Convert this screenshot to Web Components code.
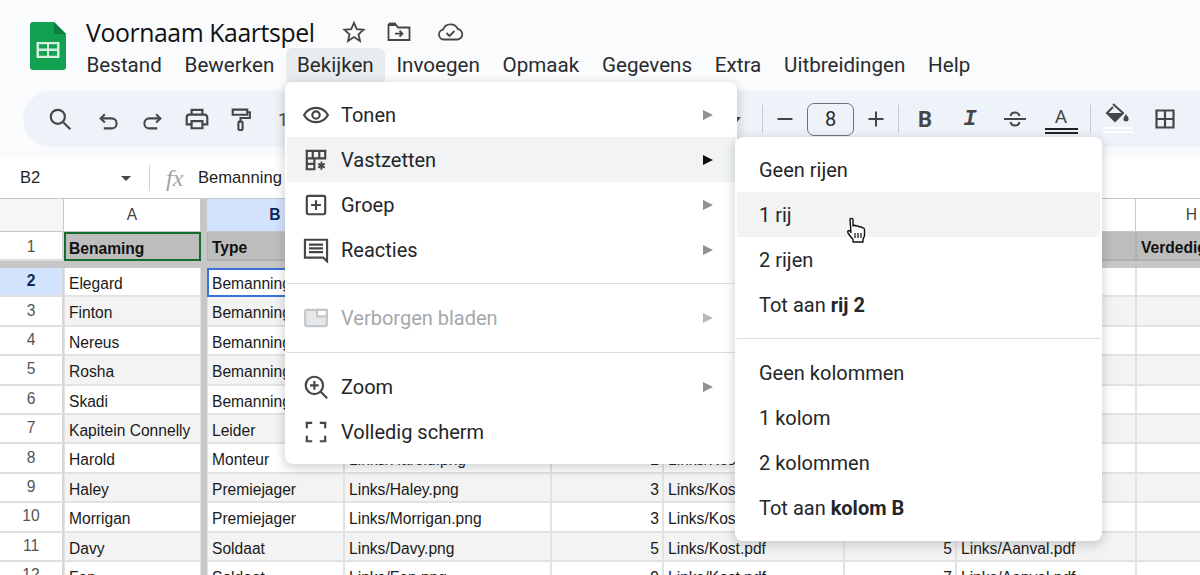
<!DOCTYPE html>
<html lang="nl">
<head>
<meta charset="UTF-8">
<title>Voornaam Kaartspel</title>
<style>
  html, body { margin: 0; height: 575px; overflow: hidden; background: #fff; }
  body { position: relative; font-family: Roboto, "Liberation Sans", sans-serif; color: #1f1f1f; }
  pop-menu.main { left: 285px; top: 82px; width: 452px; }
  pop-menu.sub { left: 735px; top: 137px; width: 367px; }
</style>
</head>
<body>
<doc-header></doc-header>
<tool-bar></tool-bar>
<formula-bar></formula-bar>
<sheet-grid></sheet-grid>

<pop-menu class="main">
  <menu-row icon="eye" arrow>Tonen</menu-row>
  <menu-row icon="freeze" arrow active>Vastzetten</menu-row>
  <menu-row icon="group" arrow>Groep</menu-row>
  <menu-row icon="comments" arrow>Reacties</menu-row>
  <menu-line></menu-line>
  <menu-row icon="hidden" arrow disabled>Verborgen bladen</menu-row>
  <menu-line></menu-line>
  <menu-row icon="zoom" arrow>Zoom</menu-row>
  <menu-row icon="full">Volledig scherm</menu-row>
</pop-menu>

<pop-menu class="sub">
  <menu-row plain>Geen rijen</menu-row>
  <menu-row plain hover>1 rij</menu-row>
  <menu-row plain>2 rijen</menu-row>
  <menu-row plain>Tot aan <b>rij 2</b></menu-row>
  <menu-line></menu-line>
  <menu-row plain>Geen kolommen</menu-row>
  <menu-row plain>1 kolom</menu-row>
  <menu-row plain>2 kolommen</menu-row>
  <menu-row plain>Tot aan <b>kolom B</b></menu-row>
</pop-menu>

<hand-cursor></hand-cursor>

<script>
  // shared icon paths, all on a 24 box
  const ICONS = {
    eye: '<path d="M1 12C3.400 7.600 7.400 5.400 12 5.400s8.600 2.200 11 6.600c-2.400 4.400-6.400 6.600-11 6.600S3.400 16.400 1 12z"/><circle cx="12" cy="12" r="3.400"/>',
    freeze: '<path d="M3.500 3.500h17v7h-10v10h-7z"/><path d="M3.500 10.500h7M3.500 15.500h7M9 3.500v7M15 3.500v7"/><path d="M17 13.500v7.500M14 15.400l6 3.700M20 15.400l-6 3.700" stroke-width="1.800"/>',
    group: '<rect x="3.500" y="3.500" width="17" height="17" rx="1.500"/><path d="M12 7.500v9M7.500 12h9"/>',
    comments: '<path d="M1.800 2.500h20.400v20l-3.500-3.500H1.800z"/><path d="M5.500 7h13M5.500 10.500h13M5.500 14h13"/>',
    hidden: '<rect x="2" y="4.500" width="20" height="15" rx="1.200" fill="#e6e7e9"/><path d="M13 4.500h9v6h-9z" fill="#fff"/>',
    zoom: '<circle cx="10.500" cy="10.500" r="8"/><path d="M16.300 16.300l6 6M10.500 6.500v8M6.500 10.500h8"/>',
    full: '<path d="M3.500 8.500v-5h5M15.500 3.500h5v5M20.500 15.500v5h-5M8.500 20.500h-5v-5"/>',
    search: '<circle cx="10" cy="10" r="6.500"/><path d="M15 15l6.500 6.500"/>',
    undo: '<path d="M8.500 5L4.500 9l4 4"/><path d="M4.500 9H15a4.800 4.800 0 0 1 0 9.600H7.500"/>',
    redo: '<path d="M15.500 5l4 4-4 4"/><path d="M19.500 9H9a4.800 4.800 0 0 0 0 9.600h7.500"/>',
    print: '<path d="M7 8V3.500h10V8"/><path d="M7 17H2.500v-6.500A2.500 2.500 0 0 1 5 8h14a2.500 2.500 0 0 1 2.500 2.500V17H17"/><path d="M7 14h10v6.500H7z"/>',
    paint: '<path d="M4.500 2.500h14v5h-14z"/><path d="M18.500 5h2.500v5.500h-9V14"/><rect x="10" y="14" width="4" height="8" rx=".8"/>',
    strike: '<path d="M1 12h22"/><path d="M7.500 9c.4-2.200 2.200-3.400 4.500-3.400s4.100 1.200 4.500 3.400"/><path d="M7.500 15c.4 2.200 2.200 3.400 4.500 3.400s4.100-1.200 4.500-3.400"/>',
    minus: '<path d="M4.500 12h15"/>',
    plus: '<path d="M4.500 12h15M12 4.500v15"/>',
    borders: '<path d="M3.500 3.500h17v17h-17zM12 3.500v17M3.500 12h17"/>'
  };
  const svg = (name, size, sw) =>
    `<svg width="${size}" height="${size}" viewBox="0 0 24 24" fill="none" stroke="currentColor" stroke-width="${sw}">${ICONS[name]}</svg>`;

  class DocHeader extends HTMLElement {
    constructor() {
      super();
      const menus = ["Bestand", "Bewerken", "Bekijken", "Invoegen", "Opmaak", "Gegevens", "Extra", "Uitbreidingen", "Help"];
      this.attachShadow({ mode: "open" }).innerHTML = `
        <style>
          :host { display: flex; height: 91px; background: #f9fbfd; padding: 0 0 0 30px; box-sizing: border-box; }
          .logo { width: 36px; height: 48px; margin-top: 22px; flex: none; }
          .col { margin-left: 20px; padding-top: 16px; }
          .title { display: flex; align-items: center; height: 32px; }
          h1 { margin: 0; font: 400 24.800px "Open Sans", sans-serif; letter-spacing: -.4px; color: #111; }
          .acts { display: flex; gap: 21px; margin-left: 27px; color: #444746; align-items: center; }
          .acts .cloud { margin-left: 5px; }
          nav { display: flex; margin: 0 0 0 -10.900px; height: 34px; }
          nav span { padding: 0 11.400px; line-height: 34px; font-size: 20.600px; color: #2a2b2d; white-space: nowrap; }
          nav .on { background: #e9ecef; border-radius: 6px 6px 0 0; }
        </style>
        <svg class="logo" viewBox="0 0 36 48">
          <path d="M3 0h21l12 12v33a3 3 0 0 1-3 3H3a3 3 0 0 1-3-3V3a3 3 0 0 1 3-3z" fill="#12a150"/>
          <path d="M24 0l12 12H24z" fill="#0c7f40"/>
          <path d="M6.500 20h23v16h-23zM9 22.300v4.300h8v-4.300zm10 0v4.300h8v-4.300zM9 29v4.700h8V29zm10 0v4.700h8V29z" fill="#d6efe0" fill-rule="evenodd"/>
        </svg>
        <div class="col">
          <div class="title">
            <h1>Voornaam Kaartspel</h1>
            <div class="acts">
              <svg width="24" height="24" viewBox="0 0 24 24" fill="none" stroke="currentColor" stroke-width="1.800"><path d="M12 2.800l2.800 6.300 6.800.7-5.100 4.500 1.500 6.700L12 17.100l-6 3.900 1.500-6.700L2.400 9.800l6.800-.7z"/></svg>
              <svg width="24" height="24" viewBox="0 0 24 24" fill="none" stroke="currentColor" stroke-width="1.800"><path d="M1.500 20V5h7.500l2 2.500h11.500V20z"/><path d="M1.500 3.500h7.500"/><path d="M8 13.700h7.500M12.500 10.700l3 3-3 3"/></svg>
              <svg class="cloud" width="27" height="24" viewBox="0 0 27 24" fill="none" stroke="currentColor" stroke-width="1.800"><path d="M7 19.500a5 5 0 0 1-1-9.900A8 8 0 0 1 20.800 9a5.300 5.300 0 0 1-.3 10.500z"/><path d="M9.500 13l3 3 5-5"/></svg>
            </div>
          </div>
          <nav>${menus.map((m) => `<span class="${m === "Bekijken" ? "on" : ""}">${m}</span>`).join("")}</nav>
        </div>`;
    }
  }

  class ToolBar extends HTMLElement {
    constructor() {
      super();
      const btn = (name, w, size = 24, sw = 2, extra = "") => `<i style="width:${w}px;${extra}">${svg(name, size, sw)}</i>`;
      this.attachShadow({ mode: "open" }).innerHTML = `
        <style>
          :host { display: block; height: 67px; box-sizing: border-box; padding: 0 0 11px 23px; background: #f9fbfd; }
          .pill { display: flex; align-items: center; height: 56px; background: #eef2f9; border-radius: 28px 0 0 28px; padding-left: 11px; color: #444746; }
          i { display: flex; justify-content: center; align-items: center; flex: none; font-style: normal; }
          .sep { width: 1px; height: 28px; background: #c7c9cc; flex: none; }
          .pct { width: 455px; margin-left: 18px; flex: none; font-size: 18px; color: #444746; }
          .drop { width: 0; height: 0; border: 4px solid transparent; border-top: 5px solid #444746; margin: 4px 21px 0 0; flex: none; }
          .size { width: 47px; height: 33px; box-sizing: border-box; border: 1.500px solid #6f7275; border-radius: 7px; font-size: 20px; color: #2a2b2d; text-align: center; line-height: 30px; flex: none; }
          .b { font: 700 22px Roboto, sans-serif; color: #444746; }
          .it { font: italic 700 22px "Liberation Mono", monospace; color: #444746; }
          .a { display: block; width: 33px; box-sizing: border-box; text-align: center; font-size: 19px; line-height: 20px; height: 28px; padding-top: 1px; border-bottom: 6px double #222; margin-top: 2px; }
        </style>
        <div class="pill">
          ${btn("search", 52, 26, 2)}
          ${btn("undo", 44, 25, 2, "margin-top:4px")}${btn("redo", 44, 25, 2, "margin-top:4px")}${btn("print", 46, 26)}${btn("paint", 40, 25)}
          <span class="pct">100%</span>
          <span class="drop"></span>
          <span class="sep"></span>
          ${btn("minus", 44, 24, 2)}
          <span class="size">8</span>
          ${btn("plus", 44, 24, 2)}
          <span class="sep"></span>
          <i class="b" style="width:52px">B</i>
          <i class="it" style="width:38px">I</i>
          ${btn("strike", 52, 24, 2)}
          <i style="width:40px"><span class="a">A</span></i>
          <i style="width:9px"></i>
          <span class="sep"></span>
          <i style="width:54px">
            <svg width="34" height="34" viewBox="0 0 34 34" fill="none" style="margin-top:2px"><path d="M12 1l10 9-8 8-8-8 6-6" stroke="#444746" stroke-width="2"/><path d="M6 10h16l-8 8z" fill="#444746"/><path d="M25 11c1.300 2.200 2.600 3.400 2.600 4.800a2.600 2.600 0 0 1-5.200 0c0-1.400 1.300-2.600 2.600-4.800z" fill="#444746"/><path d="M2 25h30M2 29h30" stroke="#fff" stroke-width="1.800"/></svg>
          </i>
          ${btn("borders", 40, 24, 2.200)}
        </div>`;
    }
  }

  class FormulaBar extends HTMLElement {
    constructor() {
      super();
      this.attachShadow({ mode: "open" }).innerHTML = `
        <style>
          :host { display: flex; align-items: center; height: 40px; box-sizing: border-box; background: #fff; font: 16.600px "Liberation Sans", sans-serif; color: #1f1f1f; }
          .ref { width: 101px; padding-left: 20px; }
          .tri { width: 0; height: 0; border: 5px solid transparent; border-top: 5px solid #444746; margin-top: 5px; }
          .sep { width: 1px; height: 26px; background: #cfd1d4; margin: 0 16px 0 18px; }
          .fx { font: italic 24px "Liberation Serif", serif; color: #a0a4a8; width: 32px; }
        </style>
        <span class="ref">B2</span><span class="tri"></span><span class="sep"></span>
        <span class="fx">fx</span><span>Bemanning</span>`;
    }
  }

  class SheetGrid extends HTMLElement {
    constructor() {
      super();
      const names = ["Elegard", "Finton", "Nereus", "Rosha", "Skadi", "Kapitein Connelly", "Harold", "Haley", "Morrigan", "Davy", "Fen"];
      const types = ["Bemanning", "Bemanning", "Bemanning", "Bemanning", "Bemanning", "Leider", "Monteur", "Premiejager", "Premiejager", "Soldaat", "Soldaat"];
      // columns C to G, only where the menus leave them visible
      const rest = {
        8: ["Links/Harold.png", "2", "Links/Kost.pdf", "", ""],
        9: ["Links/Haley.png", "3", "Links/Kost.pdf", "", ""],
        10: ["Links/Morrigan.png", "3", "Links/Kost.pdf", "", ""],
        11: ["Links/Davy.png", "5", "Links/Kost.pdf", "5", "Links/Aanval.pdf"],
        12: ["Links/Fen.png", "9", "Links/Kost.pdf", "7", "Links/Aanval.pdf"]
      };
      const fz = `<div class="fz"></div>`;
      let html = `<div class="corner"></div><div class="ch">A</div>${fz}`;
      ["B", "C", "D", "E", "F", "G", "H"].forEach((c) => { html += `<div class="ch ${c === "B" ? "sel" : ""}">${c}</div>`; });
      html += `<div class="rh first">1</div><div class="c hd a1">Benaming</div>${fz}<div class="c hd">Type</div>`;
      html += `<div class="c hd"></div>`.repeat(5) + `<div class="c hd">Verdediging</div>`;
      html += `<div class="band"></div>`;
      names.forEach((name, i) => {
        const n = i + 2;
        const odd = n % 2 ? "odd" : "";
        const r = rest[n] || ["", "", "", "", ""];
        html += `<div class="rh ${n === 2 ? "sel" : ""}">${n}</div>`;
        html += `<div class="c ${odd}">${name}</div>${fz}`;
        html += `<div class="c ${odd} ${n === 2 ? "b2" : ""}">${types[i]}</div>`;
        r.forEach((v, j) => { html += `<div class="c ${odd} ${j === 1 || j === 3 ? "num" : ""}">${v}</div>`; });
        html += `<div class="c ${odd}"></div>`;
      });
      this.attachShadow({ mode: "open" }).innerHTML = `
        <style>
          :host { display: block; font: 15.600px "Liberation Sans", sans-serif; color: #1a1a1a; }
          .grid { display: grid; grid-template-columns: 64px 137px 6px 137px 207px 112px 181px 112px 180px 112px;
                  grid-template-rows: 33px 29px 7px repeat(11, 29.400px); border-top: 1px solid #c4c7c5; overflow: hidden; }
          .fz, .band { background: #c7c7c7; }
          .band { grid-column: 1 / -1; }
          .corner, .ch { background: #fff; border-right: 1px solid #c9c9c9; border-bottom: 1px solid #c4c7c5; box-sizing: border-box; }
          .corner { background: #f5f6f8; }
          .ch { display: flex; align-items: center; justify-content: center; color: #444; }
          .ch.sel { background: #d3e3fd; color: #0b2a5b; font-weight: 700; }
          .rh { display: flex; align-items: center; justify-content: center; padding-bottom: 1px; box-sizing: border-box; background: #fff; border-right: 2px solid #d5d5d5; border-bottom: 2px solid #dedede; color: #555; }
          .rh.first { padding-top: 3px; }
          .rh.sel { background: #d3e3fd; color: #0b2a5b; font-weight: 700; }
          /* a line of 2px centred on each column boundary */
          .c { box-sizing: border-box; padding: 3px 3px 0 4px; line-height: 26px; white-space: nowrap; overflow: hidden; border-left: 1px solid #e2e2e2; border-right: 1px solid #e2e2e2; border-bottom: 2px solid #e2e2e2; background: #fff; }
          .odd { background: #f3f3f3; }
          .num { text-align: right; }
          .hd { background: #bdbdbd; font-weight: 700; border-color: #b0b0b0; color: #111; padding-top: 4px; line-height: 24px; }
          .a1 { border: 2px solid #146c2e; line-height: 24px; padding: 3px 3px 0 3px; }
          .b2 { border: 2px solid #3a72dc; line-height: 23px; padding: 2px 3px 0 3px; }
        </style>
        <div class="grid">${html}</div>`;
    }
  }

  class PopMenu extends HTMLElement {
    constructor() {
      super();
      this.attachShadow({ mode: "open" }).innerHTML = `
        <style>
          :host { display: block; position: absolute; box-sizing: border-box; padding: 10px 2px; background: #fff; border-radius: 8px;
                  box-shadow: 0 3px 10px 2px rgba(60,64,67,.2); font-size: 20px; color: #242629; }
        </style>
        <slot></slot>`;
    }
  }

  class MenuRow extends HTMLElement {
    constructor() {
      super();
      const icon = this.getAttribute("icon");
      const plain = this.hasAttribute("plain");
      this.attachShadow({ mode: "open" }).innerHTML = `
        <style>
          :host { display: flex; align-items: center; height: 45px; white-space: nowrap; }
          :host([active]), :host([hover]) { background: #f1f3f4; }
          :host([disabled]) { color: #a4a8ad; }
          .ic { width: 50px; padding-left: 4px; display: flex; justify-content: center; flex: none; color: #444746; }
          :host([disabled]) .ic { color: #c4c7c9; }
          .txt { flex: 1; padding-left: ${plain ? 22 : 0}px; }
          ::slotted(b) { font-weight: 700; }
          .arr { width: 0; height: 0; border-left: 10px solid #8e9195; border-top: 5.500px solid transparent; border-bottom: 5.500px solid transparent; margin-right: 22px; }
          :host([active]) .arr { border-left-color: #111; }
          :host([disabled]) .arr { border-left-color: #b5b8bb; }
        </style>
        ${icon ? `<span class="ic">${svg(icon, 26, 2)}</span>` : ""}
        <span class="txt"><slot></slot></span>
        ${this.hasAttribute("arrow") ? `<span class="arr"></span>` : ""}`;
    }
  }

  class MenuLine extends HTMLElement {
    constructor() {
      super();
      this.attachShadow({ mode: "open" }).innerHTML = `
        <style>:host { display: block; height: 1px; margin: 11px 0 11.500px; background: #dadce0; }</style>`;
    }
  }

  class HandCursor extends HTMLElement {
    constructor() {
      super();
      this.attachShadow({ mode: "open" }).innerHTML = `
        <style>:host { display: block; position: absolute; left: 844px; top: 217px; width: 24px; height: 27px; }</style>
        <svg width="24" height="27" viewBox="0 0 24 27">
          <path d="M6 2.500c0-1.500 3-1.500 3 0V9c1-1 2.500-1 3 .3 1-.8 2.500-.6 3 .7 1-.6 2.500-.4 3 .8 1-.3 2.500.2 2.500 2V18c0 2-1 3-1.500 4.500V25H9v-2.500c-1.500-1.500-3-3.500-5-6.500-1-2 .8-3 2-2l1 1.500z" fill="#fff" stroke="#111" stroke-width="1.400" stroke-linejoin="round"/>
          <path d="M11 16v5M14 16v5M17 16v5" stroke="#111" stroke-width="1.200"/>
        </svg>`;
    }
  }

  customElements.define("doc-header", DocHeader);
  customElements.define("tool-bar", ToolBar);
  customElements.define("formula-bar", FormulaBar);
  customElements.define("sheet-grid", SheetGrid);
  customElements.define("pop-menu", PopMenu);
  customElements.define("menu-row", MenuRow);
  customElements.define("menu-line", MenuLine);
  customElements.define("hand-cursor", HandCursor);
</script>
</body>
</html>
